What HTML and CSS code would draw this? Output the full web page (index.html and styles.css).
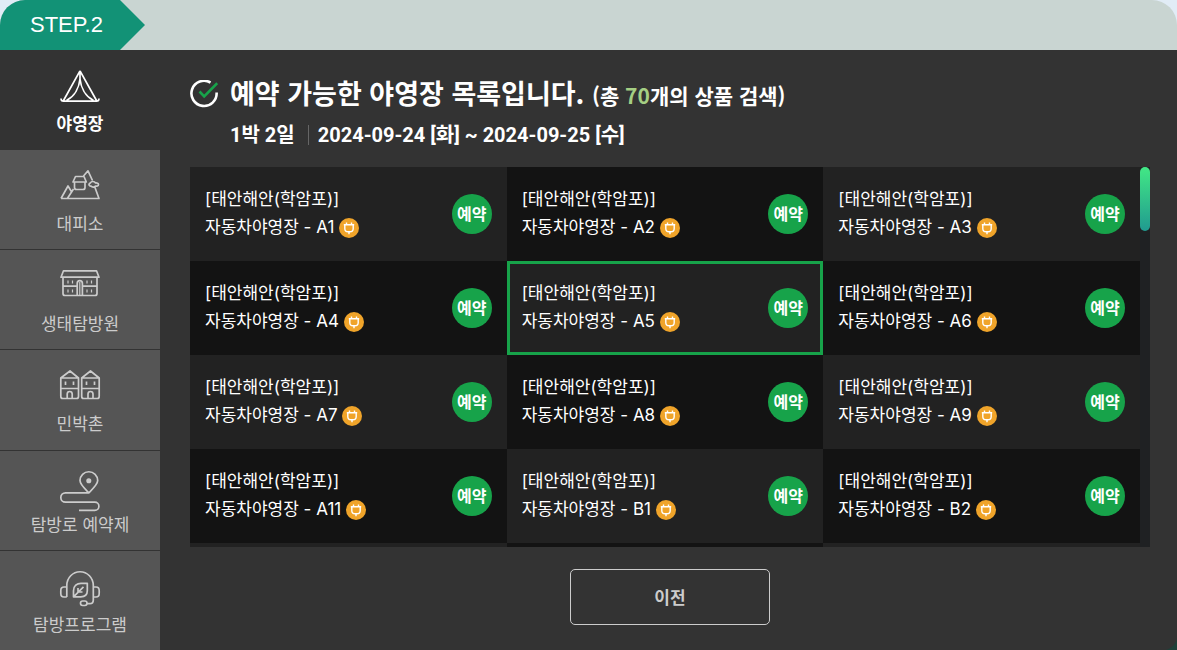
FILE: index.html
```
<!DOCTYPE html>
<html lang="ko">
<head>
<meta charset="utf-8">
<meta name="viewport" content="width=device-width, initial-scale=1">
<title>야영장 예약</title>
<link rel="stylesheet" href="styles.css">
</head>
<body>
<svg class="defs" aria-hidden="true">
	<symbol id="plug" viewBox="0 0 20 20">
		<circle cx="10" cy="10" r="10" fill="#f0a42a"/>
		<path d="M4.800 6.700h10.400M7.500 6.500V4.500M12.500 6.500V4.500M5.800 7v3.500q0 3.300 3.300 3.300h1.800q3.300 0 3.300-3.300V7M10 13.800v2.400" fill="none" stroke="#fff" stroke-width="1.400"/>
	</symbol>
</svg>
<div class="reserve">
	<header class="step">
		<h1 class="step-label">STEP.2</h1>
	</header>
	<div class="body">
		<nav class="menu">
			<button type="button" class="menu-item on">
				<svg class="menu-icon" viewBox="0 0 40 40"><path d="M20 .8 3.500 30.500M20 .8l16.500 29.700M1 28.500c0 1.800.8 2.700 2.500 2.700h33c1.700 0 2.500-.9 2.500-2.700M20 1v8c-.8 8-5 17-13.500 21.500M20 9c.8 8 5 17 13.500 21.500"/></svg>
				<span>야영장</span>
			</button>
			<button type="button" class="menu-item">
				<svg class="menu-icon" viewBox="0 0 40 40"><path d="m1 28.500 7-12.500 4 6.500M7.500 28.300 13.500 19M1 28.500h38l-4.200-11.500M23.500 6 28 .8l4.500 9.700M15.500 6.500h8.500l2.300 5.500H13zM14.500 12v5.500q0 2 2 2h6.500q2 0 2-2V12M29 14c1.500-.3 1.500-2.500 3.500-2.500s2.500.2 3 1.500c1.500-.2 3 .4 3 1.500 0 1.600-2 1.800-3 1.500-1 1.400-3.500 1.400-4.500 0-1 .2-2.200-.6-2-2z"/></svg>
				<span>대피소</span>
			</button>
			<button type="button" class="menu-item">
				<svg class="menu-icon" viewBox="0 0 40 40"><path d="M3.500.8h33L39 7.200H1zM3 7.200v16.300q0 2 2 2h30q2 0 2-2V7.200M3 16.200h14M23 16.200h14M17.200 25.500V13.500q0-2.800 2.600-2.800t2.600 2.800v12"/><path d="M8 10.500v3M12.500 10.500v3M27 10.500v3M31.500 10.500v3M8 19.500v3M12.500 19.500v3M27 19.500v3M31.500 19.500v3M19.800 12v13" class="thin"/></svg>
				<span>생태탐방원</span>
			</button>
			<button type="button" class="menu-item">
				<svg class="menu-icon" viewBox="0 0 40 40"><path d="M.8 8 10 1l8.500 7v18.500q0 2-2 2H2.800q-2 0-2-2zM.8 8h17.700M.8 18.500h17.700M7.200 28.500V24q0-2.500 2.500-2.500t2.500 2.500v4.500M21.700 8l8.800-7L39.200 8v18.500q0 2-2 2H23.700q-2 0-2-2zM21.700 8h17.500M21.700 18.500h17.500M28 28.500V24q0-2.500 2.500-2.500T33 24v4.500"/><path d="M5.500 11.500v3.500M13.500 11.500v3.500M26.500 11.500v3.500M34.500 11.500v3.500"/></svg>
				<span>민박촌</span>
			</button>
			<button type="button" class="menu-item">
				<svg class="menu-icon" viewBox="0 0 40 40"><path d="M28.800 21.800C24 17 20 13.500 20 9.600a8.800 8.800 0 0 1 17.700 0c0 3.900-4 7.400-8.900 12.200H5.500a4.700 4.700 0 0 0 0 9.400h29.300a4 4 0 0 1 0 8.200H19"/><circle cx="28.800" cy="9.700" r="1.700" class="dot"/></svg>
				<span>탐방로 예약제</span>
			</button>
			<button type="button" class="menu-item">
				<svg class="menu-icon" viewBox="0 0 40 40"><path d="M6.800 26V14.500a13.200 13.700 0 0 1 26.500 0V26M6.800 16H4q-3.200 0-3.200 3.500v3Q.8 26 4 26h2.800M33.300 16H36q3.200 0 3.200 3.500v3q0 3.500-3.200 3.500h-2.700v3q0 3.700-3.500 3.700H27"/><rect x="20.500" y="30" width="6.500" height="4.500" rx="2.200"/><path d="M27.300 12.300v7.500c0 4-2.500 6-6.500 6h-7.300v-6c0-5 3.500-7.500 7.500-7.500zM14 25.300l9.500-9.500M18 21v-4M18 21h4.500"/></svg>
				<span>탐방프로그램</span>
			</button>
		</nav>
		<main class="content">
			<div class="heading">
				<svg class="check" viewBox="0 0 28 28"><path d="M20.500 2.600A12.600 12.600 0 1 0 26.600 12.500" stroke="#fff"/><path d="m9.500 11.500 4.700 4.800L27.200 3.200" stroke="#17a34a"/></svg>
				<h2>예약 가능한 야영장 목록입니다. <small>(총 <em>70</em>개의 상품 검색)</small></h2>
			</div>
			<p class="period"><span class="nights">1박 2일</span><span>2024-09-24 [화] ~ 2024-09-25 [수]</span></p>
			<div class="list-wrap">
				<ul class="list" tabindex="0">
					<li><p>[태안해안(학암포)]<br>자동차야영장 - A1 <svg class="plug"><use href="#plug"/></svg></p><button type="button">예약</button></li>
					<li><p>[태안해안(학암포)]<br>자동차야영장 - A2 <svg class="plug"><use href="#plug"/></svg></p><button type="button">예약</button></li>
					<li><p>[태안해안(학암포)]<br>자동차야영장 - A3 <svg class="plug"><use href="#plug"/></svg></p><button type="button">예약</button></li>
					<li><p>[태안해안(학암포)]<br>자동차야영장 - A4 <svg class="plug"><use href="#plug"/></svg></p><button type="button">예약</button></li>
					<li class="on"><p>[태안해안(학암포)]<br>자동차야영장 - A5 <svg class="plug"><use href="#plug"/></svg></p><button type="button">예약</button></li>
					<li><p>[태안해안(학암포)]<br>자동차야영장 - A6 <svg class="plug"><use href="#plug"/></svg></p><button type="button">예약</button></li>
					<li><p>[태안해안(학암포)]<br>자동차야영장 - A7 <svg class="plug"><use href="#plug"/></svg></p><button type="button">예약</button></li>
					<li><p>[태안해안(학암포)]<br>자동차야영장 - A8 <svg class="plug"><use href="#plug"/></svg></p><button type="button">예약</button></li>
					<li><p>[태안해안(학암포)]<br>자동차야영장 - A9 <svg class="plug"><use href="#plug"/></svg></p><button type="button">예약</button></li>
					<li><p>[태안해안(학암포)]<br>자동차야영장 - A11 <svg class="plug"><use href="#plug"/></svg></p><button type="button">예약</button></li>
					<li><p>[태안해안(학암포)]<br>자동차야영장 - B1 <svg class="plug"><use href="#plug"/></svg></p><button type="button">예약</button></li>
					<li><p>[태안해안(학암포)]<br>자동차야영장 - B2 <svg class="plug"><use href="#plug"/></svg></p><button type="button">예약</button></li>
					<li></li>
					<li></li>
					<li></li>
				</ul>
				<div class="track"><div class="thumb"></div></div>
			</div>
			<button type="button" class="prev">이전</button>
		</main>
	</div>
</div>
</body>
</html>
```
FILE: styles.css
```
*{
	box-sizing: border-box;
	margin: 0;
	padding: 0;
}
body{
	background: linear-gradient(#e1ecf6 50%, #1f4039 50%);
	color: #fff;
	font-family: Inter, "Noto Sans CJK KR", sans-serif;
	font-size: 17px;
}
button{
	border: none;
	color: inherit;
	cursor: pointer;
	font: inherit;
}
.defs{
	display: none;
}
.reserve{
	display: flex;
	flex-direction: column;
	min-height: 100vh;
}
.step{
	background: #c9d5d2;
	border-radius: 25px 25px 0 0;
	overflow: hidden;
}
.step-label{
	background: #129276;
	clip-path: polygon(0 0, 120px 0, 100% 50%, 120px 100%, 0 100%);
	font-family: "Liberation Sans", sans-serif;
	font-size: 22px;
	font-weight: 400;
	line-height: 50px;
	padding-left: 30px;
	width: 145px;
}
.body{
	background: #333;
	border-bottom-right-radius: 18px 14px;
	display: flex;
	flex: 1;
}

/* left menu */
.menu{
	display: grid;
	flex: none;
	grid-auto-rows: 1fr;
	width: 160px;
}
.menu-item{
	align-items: center;
	background: #555;
	border-bottom: 1px solid #333;
	color: #ccc;
	display: flex;
	flex-direction: column;
	line-height: 28px;
	min-height: 100px;
	padding-top: 20px;
}
.menu-item:last-child{
	border-bottom: none;
}
.menu-item.on{
	background: #333;
	color: #fff;
	font-weight: 700;
}
.menu-icon{
	fill: none;
	flex: none;
	height: 40px;
	overflow: visible;
	stroke: currentColor;
	stroke-linejoin: round;
	stroke-width: 1.700;
	width: 40px;
}
.menu-icon .thin{
	stroke-width: 1.200;
}
.menu-icon .dot{
	fill: currentColor;
}

/* list of sites */
.content{
	flex: 1;
	min-width: 0;
	padding: 23px 27px 26px 30px;
}
.heading{
	align-items: center;
	display: flex;
	gap: 12px;
}
.check{
	fill: none;
	flex: none;
	height: 28px;
	stroke-width: 2.600;
	width: 28px;
}
h2{
	font-family: "Noto Sans CJK KR", sans-serif;
	font-size: 27px;
	font-weight: 700;
	line-height: 40px;
}
h2 small{
	font-size: 21px;
}
h2 em{
	color: #a5cf83;
	font-style: normal;
}
.period{
	align-items: center;
	display: flex;
	font-family: Roboto, "Noto Sans CJK KR", sans-serif;
	font-size: 20px;
	font-weight: 700;
	line-height: 20px;
	margin: 10px 0 22px;
	padding-left: 40px;
}
.nights{
	border-right: 1px solid #666;
	margin-right: 9px;
	padding-right: 13px;
}
.list-wrap{
	display: flex;
	height: 380px;
}
.list{
	display: grid;
	flex: 1;
	grid-auto-rows: 94px;
	grid-template-columns: repeat(3, 1fr);
	list-style: none;
	overflow-y: auto;
	scrollbar-width: none;
}
.list li{
	align-items: center;
	background: #131313;
	display: flex;
	justify-content: space-between;
	line-height: 28px;
	padding: 0 15px;
}
.list li:nth-child(odd){
	background: #222;
}
.list li.on,
.list li:hover{
	box-shadow: inset 0 0 0 3px #17a34a;
}
.list p{
	padding-bottom: 2px;
}
.list button{
	background: #17a34a;
	border-radius: 50%;
	font-size: 16px;
	font-weight: 700;
	height: 40px;
	width: 40px;
}
.plug{
	height: 20px;
	vertical-align: middle;
	width: 20px;
}
.track{
	background: #1f2123;
	width: 10px;
}
.thumb{
	background: linear-gradient(#42e885, #209a90);
	border-radius: 5px;
	height: 64px;
}
.prev{
	background: none;
	border: 1px solid #ccc;
	border-radius: 5px;
	color: #ccc;
	display: block;
	font-weight: 700;
	height: 56px;
	margin: 22px auto 0;
	padding-bottom: 2px;
	width: 200px;
}
```
